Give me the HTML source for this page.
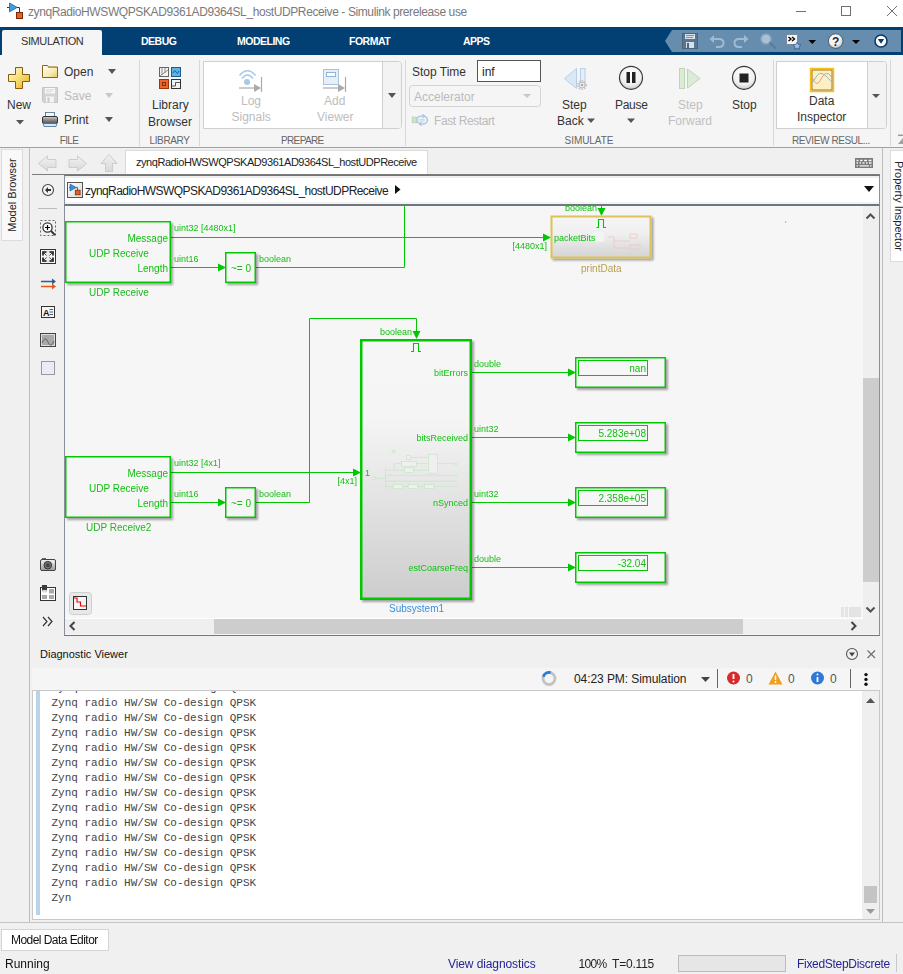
<!DOCTYPE html>
<html><head><meta charset="utf-8">
<style>
*{margin:0;padding:0;box-sizing:border-box}
html,body{width:903px;height:974px;overflow:hidden;background:#f0f0f0;font-family:"Liberation Sans",sans-serif;font-size:12px;color:#222}
.a{position:absolute}
.t{position:absolute;white-space:nowrap;line-height:1}
svg{position:absolute;overflow:visible}
</style></head><body>
<!-- TITLE BAR -->
<div class="a" style="left:0;top:0;width:903px;height:27px;background:#fff"></div>
<svg style="left:0;top:0" width="30" height="27">
  <path d="M7 7.5 H9.5 M17 7.5 H19.5 V12" stroke="#333" stroke-width="1" fill="none"/>
  <path d="M9.5 3 L17.2 7.4 L9.5 11.8 Z" fill="#3f9ee0" stroke="#1a5fa0" stroke-width="0.8"/>
  <rect x="16.5" y="12.5" width="6" height="6" fill="#e4622a" stroke="#7a2a08" stroke-width="1"/>
</svg>
<div class="t" style="left:28px;top:6px;font-size:12px;letter-spacing:-0.4px;color:#7a7a7a">zynqRadioHWSWQPSKAD9361AD9364SL_hostUDPReceive - Simulink prerelease use</div>
<svg style="left:0;top:0" width="903" height="27">
  <path d="M796 11.5 H806" stroke="#707070" stroke-width="1"/>
  <rect x="841.5" y="6.5" width="9" height="9" fill="none" stroke="#707070" stroke-width="1"/>
  <path d="M887 6 L897 16 M897 6 L887 16" stroke="#707070" stroke-width="1"/>
</svg>

<!-- TAB STRIP -->
<div class="a" style="left:0;top:27px;width:903px;height:28px;background:#023f72"></div>
<div class="a" style="left:2px;top:30px;width:100px;height:25px;background:#f5f5f5;border-radius:2px 2px 0 0"></div>
<div class="t" style="left:21px;top:36px;font-size:11px;letter-spacing:-0.4px;color:#333">SIMULATION</div>
<div class="t" style="left:141px;top:36px;font-size:10.5px;font-weight:bold;letter-spacing:-0.5px;color:#fff">DEBUG</div>
<div class="t" style="left:237px;top:36px;font-size:10.5px;font-weight:bold;letter-spacing:-0.5px;color:#fff">MODELING</div>
<div class="t" style="left:349px;top:36px;font-size:10.5px;font-weight:bold;letter-spacing:-0.5px;color:#fff">FORMAT</div>
<div class="t" style="left:463px;top:36px;font-size:10.5px;font-weight:bold;letter-spacing:-0.5px;color:#fff">APPS</div>
<svg style="left:0;top:0" width="903" height="60" id="qab">
  <path d="M665 41 L672 30 H901 V52 H672 Z" fill="#668cae"/>
  <!-- save -->
  <rect x="682.5" y="33.5" width="15" height="15" fill="#5a7590" stroke="#4d647a"/>
  <rect x="685" y="34" width="10" height="5" fill="#d8e2ec"/>
  <path d="M686 35.5 H694 M686 37.5 H693" stroke="#6a7f94" stroke-width="0.8"/>
  <rect x="686" y="42" width="8" height="6" fill="#d8e2ec"/>
  <rect x="687" y="43" width="2" height="5" fill="#4d647a"/>
  <!-- undo -->
  <path d="M711 39 H719 Q723.5 39 723.5 43 Q723.5 47 719 47 H716" fill="none" stroke="#9fbad2" stroke-width="2"/>
  <path d="M709.5 39 L714 35 V43 Z" fill="#9fbad2"/>
  <!-- redo -->
  <path d="M747 39 H739 Q734.5 39 734.5 43 Q734.5 47 739 47 H742" fill="none" stroke="#9fbad2" stroke-width="2"/>
  <path d="M748.5 39 L744 35 V43 Z" fill="#9fbad2"/>
  <!-- search -->
  <circle cx="766" cy="39" r="5" fill="#a9c0d6" stroke="#88a4bf" stroke-width="1.5"/>
  <path d="M769.5 42.5 L776 48.5" stroke="#5a7a98" stroke-width="2"/>
  <!-- shortcut -->
  <rect x="786.5" y="34.5" width="11" height="10" fill="#f4f4f4" stroke="#7a8a9a"/>
  <path d="M788.5 37 L791 39 L788.5 41 M792 37 L794.5 39 L792 41" stroke="#000" stroke-width="1.3" fill="none"/>
  <path d="M797 42 L798.2 44.5 L801 44.8 L799 46.6 L799.5 49.3 L797 48 L794.5 49.3 L795 46.6 L793 44.8 L795.8 44.5 Z" fill="#9cc4ec" stroke="#2a4a6a" stroke-width="0.6"/>
  <path d="M808.5 40 H816 L812.25 44 Z" fill="#000"/>
  <!-- help -->
  <defs><radialGradient id="hg" cx="40%" cy="35%" r="70%"><stop offset="0" stop-color="#fff"/><stop offset="0.6" stop-color="#f0f0f0"/><stop offset="1" stop-color="#b8b8b8"/></radialGradient></defs>
  <circle cx="835.7" cy="41.1" r="7.3" fill="url(#hg)" stroke="#3a4a5a" stroke-width="0.8"/>
  <text x="835.7" y="45.5" text-anchor="middle" font-family="Liberation Sans" font-weight="bold" font-size="12" fill="#1a2a40">?</text>
  <path d="M852 40 H860 L856 44 Z" fill="#000"/>
  <!-- circle down -->
  <circle cx="881" cy="41" r="6" fill="#fff" stroke="#0a3a6a" stroke-width="1.6"/>
  <path d="M877.8 39 H884.2 L881 43.8 Z" fill="#0a3a6a"/>
</svg>

<!-- RIBBON -->
<div class="a" style="left:0;top:55px;width:903px;height:92px;background:#f5f5f5"></div>
<div class="a" style="left:0;top:147px;width:903px;height:1px;background:#a0a0a0"></div>


<!-- separators -->
<div class="a" style="left:139px;top:60px;width:1px;height:86px;background:#d8d8d8"></div>
<div class="a" style="left:199px;top:60px;width:1px;height:86px;background:#d8d8d8"></div>
<div class="a" style="left:405px;top:60px;width:1px;height:86px;background:#d8d8d8"></div>
<div class="a" style="left:773px;top:60px;width:1px;height:86px;background:#d8d8d8"></div>
<div class="a" style="left:890px;top:60px;width:1px;height:86px;background:#d8d8d8"></div>
<!-- section labels -->
<div class="t" style="left:59.7px;top:136px;font-size:10px;letter-spacing:-0.6px;color:#666">FILE</div>
<div class="t" style="left:149.5px;top:136px;font-size:10px;letter-spacing:-0.37px;color:#666">LIBRARY</div>
<div class="t" style="left:281px;top:136px;font-size:10px;letter-spacing:-0.64px;color:#666">PREPARE</div>
<div class="t" style="left:564.6px;top:136px;font-size:10px;letter-spacing:-0.06px;color:#666">SIMULATE</div>
<div class="t" style="left:792px;top:136px;font-size:10px;color:#666;letter-spacing:-0.4px">REVIEW RESUL...</div>
<svg style="left:0;top:0" width="903" height="150">
  <!-- New plus -->
  <defs>
    <linearGradient id="plg" x1="0" y1="0" x2="1" y2="1"><stop offset="0" stop-color="#fffbe0"/><stop offset="0.45" stop-color="#f7e27a"/><stop offset="1" stop-color="#e2ae1c"/></linearGradient>
    <linearGradient id="flg" x1="0" y1="0" x2="1" y2="1"><stop offset="0" stop-color="#ffffff"/><stop offset="0.6" stop-color="#f8eab0"/><stop offset="1" stop-color="#e8c860"/></linearGradient>
    <linearGradient id="prg" x1="0" y1="0" x2="0" y2="1"><stop offset="0" stop-color="#d0d0d0"/><stop offset="0.5" stop-color="#8a8a8a"/><stop offset="1" stop-color="#555"/></linearGradient>
  </defs>
  <path d="M15.5 67.5 H22.5 V74.5 H29.5 V81.5 H22.5 V88.5 H15.5 V81.5 H8.5 V74.5 H15.5 Z" fill="url(#plg)" stroke="#8a5a10" stroke-width="1"/>
  <path d="M16 120 L24 120 L20 124.5 Z" fill="#555"/>
  <!-- Open folder -->
  <path d="M42.5 65.5 H47.5 L48.5 67 H57.5 V77.5 H42.5 Z" fill="url(#flg)" stroke="#8a6418" stroke-width="1"/>
  <path d="M48 67.5 H57" stroke="#c89a30" stroke-width="0.8"/>
  <path d="M108 69 L116 69 L112 74 Z" fill="#555"/>
  <!-- Save (disabled) -->
  <path d="M42.5 87.5 H57.5 V102.5 H44 L42.5 101 Z" fill="#d4d4d4" stroke="#c4c4c4"/>
  <rect x="45" y="88" width="10" height="5.5" fill="#f8f8f8"/>
  <path d="M46 89.8 H54 M46 91.8 H52" stroke="#c8c8c8" stroke-width="0.7"/>
  <rect x="46" y="96.5" width="8" height="6" fill="#f4f4f4"/>
  <rect x="47.5" y="97.5" width="2" height="5" fill="#c8c8c8"/>
  <path d="M105 93 L113 93 L109 98 Z" fill="#c8c8c8"/>
  <!-- Print -->
  <rect x="45.5" y="112.5" width="9" height="4" fill="#f4f8fc" stroke="#4a6a8a" stroke-width="0.8"/>
  <rect x="42.5" y="116.5" width="15" height="7" rx="1.5" fill="url(#prg)" stroke="#333"/>
  <path d="M43 123.5 H57 L56 126.5 H44 Z" fill="#d8e8f6" stroke="#3a6a9a" stroke-width="0.8"/>
  <path d="M105 117 L113 117 L109 122 Z" fill="#555"/>
  <!-- Library browser -->
  <rect x="159.5" y="67.5" width="9" height="9" fill="#f4f4f4" stroke="#666"/>
  <path d="M162 68 V75 M165 68 V73 M160 76 L168 70" stroke="#777" stroke-width="0.8"/>
  <rect x="171.5" y="67.5" width="9" height="9" fill="#5cb3e0" stroke="#1b5d9c"/>
  <path d="M173 73 Q174.5 69 176 72 T179 71" stroke="#1b5d9c" stroke-width="1" fill="none"/>
  <rect x="159.5" y="79.5" width="9" height="9" fill="#e8672a" stroke="#9a3510"/>
  <rect x="162.5" y="82.5" width="3" height="3" fill="none" stroke="#8a2a08"/>
  <rect x="171.5" y="79.5" width="9" height="9" fill="#eef3f8" stroke="#333"/>
  <path d="M172 86 H175.5 V82.5 H180" stroke="#555" stroke-width="1" fill="none"/>
  <!-- Prepare gallery -->
  <path d="M203.5 61.5 H398.5 Q401.5 61.5 401.5 64.5 V125.5 Q401.5 128.5 398.5 128.5 H203.5 Z" fill="#fff" stroke="#cfcfcf"/><path d="M382.5 62 H398.5 Q401 62 401 64.5 V125.5 Q401 128 398.5 128 H382.5 Z" fill="#f3f3f3"/>
  <path d="M382.5 62 V128" stroke="#cfcfcf"/>
  <path d="M388 93 L396 93 L392 98 Z" fill="#555"/>
  <!-- Log signals -->
  <path d="M239.5 75.5 Q247.5 66 255.5 75.5" stroke="#a6c8e4" stroke-width="1.5" fill="none"/>
  <path d="M242 78.5 Q247.5 71.5 253 78.5" stroke="#a6c8e4" stroke-width="1.5" fill="none"/>
  <circle cx="247" cy="82" r="3" fill="#a8c8e8"/>
  <path d="M239 88 H256" stroke="#aaa" stroke-width="1.2"/>
  <path d="M254 84 L261 88 L254 92 Z" fill="#aaa"/>
  <path d="M261.5 77 V92" stroke="#aaa" stroke-width="1.2"/>
  <!-- Add viewer -->
  <rect x="323.5" y="69.5" width="15" height="15" fill="#e6eef7" stroke="#a9c3dc"/>
  <rect x="326.5" y="72.5" width="9" height="4" fill="#fff" stroke="#8fb3d6"/>
  <path d="M323 88 H340" stroke="#aaa" stroke-width="1.2"/>
  <path d="M338 84 L345 88 L338 92 Z" fill="#aaa"/>
  <path d="M345.5 77 V92" stroke="#aaa" stroke-width="1.2"/>
  <!-- Stop time box -->
  <rect x="477.5" y="60.5" width="63" height="21" fill="#fff" stroke="#555"/>
  <!-- Accelerator dropdown -->
  <rect x="409.5" y="85.5" width="131" height="21" rx="3" fill="#f5f5f5" stroke="#d4d4d4"/>
  <path d="M523 94 L531 94 L527 98 Z" fill="#c8c8c8"/>
  <!-- Fast restart icon -->
  <rect x="412.2" y="117.1" width="5" height="5.6" fill="#cfe3c8" stroke="#b6d0ae" stroke-width="0.7"/>
  <ellipse cx="422.2" cy="120" rx="5.3" ry="4.2" fill="#e8f0f8" stroke="#a8c4de" stroke-width="1.3"/>
  <path d="M422.5 114 L424.5 116 L422.5 118 M421.5 122 L419.5 124 L421.5 126" stroke="#9ab8d4" stroke-width="1" fill="none"/>
  <path d="M419.5 119.5 H424.5 M419.5 121 H424.5" stroke="#c0d4e6" stroke-width="0.8"/>
  <!-- Step back -->
  <path d="M576.5 68.5 L564.5 78.6 L576.5 88.5 Z" fill="#d8e8f6" stroke="#b7cfe5" stroke-width="1"/>
  <rect x="580.5" y="68.5" width="4.5" height="14" fill="#e4eef8" stroke="#b7cfe5"/>
  <circle cx="582" cy="85" r="4.2" fill="none" stroke="#c4c4c4" stroke-width="1.6" stroke-dasharray="1.6,1.1"/>
  <circle cx="582" cy="85" r="3" fill="#ececec" stroke="#bdbdbd" stroke-width="1"/>
  <circle cx="582" cy="85" r="1.2" fill="#aaa"/>
  <path d="M627 118.5 L635 118.5 L631 123 Z" fill="#555"/>
  <!-- Pause -->
  <defs>
    <radialGradient id="cg" cx="50%" cy="35%" r="65%"><stop offset="0" stop-color="#ffffff"/><stop offset="0.7" stop-color="#f0f0f0"/><stop offset="1" stop-color="#c8c8c8"/></radialGradient>
    <linearGradient id="pg" x1="0" y1="0" x2="0" y2="1"><stop offset="0" stop-color="#fff"/><stop offset="1" stop-color="#d8d8d8"/></linearGradient>
  </defs>
  <circle cx="631" cy="77.8" r="11.5" fill="url(#cg)" stroke="#3a3a3a" stroke-width="1.2"/>
  <rect x="626.5" y="72" width="3.5" height="11" fill="#222"/>
  <rect x="632" y="72" width="3.5" height="11" fill="#222"/>
  <!-- Step forward -->
  <rect x="679.5" y="68.5" width="5" height="20" fill="#dcebd8" stroke="#bcd6b6"/>
  <path d="M687.5 69 L700 78.5 L687.5 88 Z" fill="#dcebd8" stroke="#bcd6b6" stroke-width="1"/>
  <!-- Stop -->
  <circle cx="744" cy="77.8" r="11.5" fill="url(#cg)" stroke="#3a3a3a" stroke-width="1.2"/>
  <rect x="739.5" y="73.5" width="9" height="9" fill="#222"/>
  <!-- Data inspector box -->
  <path d="M776.5 61.5 H883.5 Q886.5 61.5 886.5 64.5 V125.5 Q886.5 128.5 883.5 128.5 H776.5 Z" fill="#fff" stroke="#cfcfcf"/>
  <path d="M867.5 62 H883.5 Q886 62 886 64.5 V125.5 Q886 128 883.5 128 H867.5 Z" fill="#f3f3f3" stroke="none"/><path d="M867.5 62 V128" stroke="#cfcfcf"/>
  <path d="M872 94 L880 94 L876 98 Z" fill="#555"/>
  <rect x="810.5" y="68.5" width="23" height="23" fill="#fdf1c4" stroke="#f2c218" stroke-width="1.5"/>
  <rect x="812" y="70" width="20" height="20" fill="none" stroke="#a8731c" stroke-width="1"/>
  <path d="M812 77 C814 82 816 84 818 83 C821 81 823 73 826.7 73.4 C829.5 73.6 831 76 832 78.6" stroke="#e09a88" stroke-width="1" fill="none"/>
  <path d="M812 83 C815 80 817 73.4 820.8 73.4 C824 73.4 828 78 832 82.2" stroke="#8cb4c8" stroke-width="1" fill="none"/>
  <!-- little fragment right -->
  <path d="M898 135.3 H903" stroke="#999" stroke-width="1.5"/><path d="M898 144 L903 138 V144 Z" fill="#a0a0a0"/>
</svg>
<div class="t" style="left:7px;top:99px;color:#333">New</div>
<div class="t" style="left:64px;top:66px;color:#333">Open</div>
<div class="t" style="left:64px;top:90px;color:#bbb">Save</div>
<div class="t" style="left:64px;top:114px;color:#333">Print</div>
<div class="t" style="left:152px;top:99px;color:#333">Library</div>
<div class="t" style="left:148px;top:115.5px;color:#333">Browser</div>
<div class="t" style="left:241px;top:95px;color:#bdbdbd">Log</div>
<div class="t" style="left:231.5px;top:111px;color:#bdbdbd">Signals</div>
<div class="t" style="left:324px;top:95px;color:#bdbdbd">Add</div>
<div class="t" style="left:317px;top:111px;color:#bdbdbd">Viewer</div>
<div class="t" style="left:412px;top:66px;color:#333">Stop Time</div>
<div class="t" style="left:482px;top:66px;color:#222">inf</div>
<div class="t" style="left:414px;top:91px;color:#bbb">Accelerator</div>
<div class="t" style="left:434px;top:115px;color:#bbb;letter-spacing:-0.4px">Fast Restart</div>
<div class="t" style="left:562px;top:99px;color:#333">Step</div>
<div class="t" style="left:557px;top:115px;color:#333">Back</div>
<svg style="left:0;top:0" width="903" height="150"><path d="M587 118.5 L595 118.5 L591 123 Z" fill="#555"/></svg>
<div class="t" style="left:615px;top:99px;color:#333;letter-spacing:-0.3px">Pause</div>
<div class="t" style="left:678px;top:99px;color:#c0c0c0">Step</div>
<div class="t" style="left:668px;top:115px;color:#c0c0c0">Forward</div>
<div class="t" style="left:732px;top:99px;color:#333">Stop</div>
<div class="t" style="left:809px;top:95px;color:#333">Data</div>
<div class="t" style="left:797px;top:111px;color:#333">Inspector</div>


<!-- LEFT MODEL BROWSER TAB -->
<div class="a" style="left:1px;top:149px;width:22px;height:92px;background:#f9f9f9;border:1px solid #dcdcdc"></div>
<div class="t" style="left:12px;top:195px;font-size:11px;color:#222;transform:translate(-50%,-50%) rotate(-90deg);transform-origin:center">Model Browser</div>
<div class="a" style="left:29px;top:148px;width:1px;height:775px;background:#bdbdbd"></div>
<!-- RIGHT PROPERTY INSPECTOR -->
<div class="a" style="left:882px;top:148px;width:1px;height:775px;background:#bdbdbd"></div>
<div class="a" style="left:890px;top:150px;width:16px;height:112px;background:#fff;border:1px solid #dcdcdc"></div>
<div class="t" style="left:898px;top:206px;font-size:11px;color:#222;transform:translate(-50%,-50%) rotate(90deg);transform-origin:center">Property Inspector</div>

<!-- EDITOR TOOLBAR ROW -->
<div class="a" style="left:30px;top:148px;width:850px;height:27px;background:#f0f0f0"></div>
<svg style="left:0;top:0" width="903" height="210">
  <defs><linearGradient id="nag" x1="0" y1="0" x2="0" y2="1"><stop offset="0" stop-color="#f2f2f2"/><stop offset="1" stop-color="#d8d8d8"/></linearGradient></defs>
  <path d="M38.5 163.5 L47.5 156 V159.5 H56 V167.5 H47.5 V171 Z" fill="url(#nag)" stroke="#cccccc"/>
  <path d="M86.5 163.5 L77.5 156 V159.5 H69 V167.5 H77.5 V171 Z" fill="url(#nag)" stroke="#cccccc"/>
  <path d="M109 154.5 L117 163.5 H112.5 V171.5 H105.5 V163.5 H101 Z" fill="url(#nag)" stroke="#cccccc"/>
  <!-- keyboard -->
  <rect x="855" y="158" width="18" height="10" fill="#7a7a7a"/>
  <path d="M856.5 160.5 H858.5 M860 160.5 H862.5 M864 160.5 H867 M868.5 160.5 H871.5 M856.5 163 H858 M859.5 163 H861 M862.5 163 H864.5 M866 163 H867.5 M869 163 H871.5 M856.5 165.8 H858 M859.5 165.8 H869 M870 165.8 H871.5" stroke="#f4f4f4" stroke-width="1.3"/>
</svg>
<div class="a" style="left:125px;top:150px;width:303px;height:25px;background:#fff;border:1px solid #dadada;border-bottom:none"></div>
<div class="t" style="left:136px;top:157px;font-size:11px;letter-spacing:-0.45px;color:#222">zynqRadioHWSWQPSKAD9361AD9364SL_hostUDPReceive</div>
<div class="a" style="left:32px;top:174px;width:848px;height:1px;background:#7c7c7c"></div>

<!-- LEFT PALETTE -->
<div class="a" style="left:30px;top:175px;width:34px;height:462px;background:#f0f0f0"></div>
<svg style="left:0;top:0" width="70" height="640">
  <circle cx="48" cy="190" r="5.5" fill="#f4f4f4" stroke="#444" stroke-width="1.1"/>
  <path d="M45 190 L48 187 V189 H51 V191 H48 V193 Z" fill="#333"/>
  <path d="M38 208.5 H57" stroke="#bbb"/>
  <rect x="40.5" y="220.5" width="15" height="15" fill="none" stroke="#666" stroke-dasharray="2,2"/>
  <circle cx="47.5" cy="227.5" r="4.6" fill="#fff" stroke="#333" stroke-width="1.3"/>
  <path d="M45 227.5 H50 M47.5 225 V230" stroke="#000" stroke-width="1.2"/>
  <path d="M51 231 L55 235" stroke="#333" stroke-width="1.8"/>
  <defs><linearGradient id="fig" x1="0" y1="0" x2="1" y2="0"><stop offset="0" stop-color="#fff"/><stop offset="0.5" stop-color="#e6e6e6"/><stop offset="1" stop-color="#fff"/></linearGradient></defs>
  <rect x="40.5" y="249.5" width="15" height="14" fill="url(#fig)" stroke="#333"/>
  <path d="M43 255.5 V252 H46.5 M53 255.5 V252 H49.5 M43 257.5 V261 H46.5 M53 257.5 V261 H49.5" stroke="#111" stroke-width="1.6" fill="none"/>
  <path d="M43.5 252.5 L46.5 255.5 M52.5 252.5 L49.5 255.5 M43.5 260.5 L46.5 257.5 M52.5 260.5 L49.5 257.5" stroke="#333" stroke-width="0.9"/>
  <path d="M41 281.5 H53" stroke="#2f5f8f" stroke-width="1.5"/><path d="M52 278.5 L56 281.5 L52 284.5 Z" fill="#2f5f8f"/>
  <path d="M41 286.5 H53" stroke="#e05a20" stroke-width="1.5"/><path d="M52 283.5 L56 286.5 L52 289.5 Z" fill="#e05a20"/>
  <rect x="41.5" y="306.5" width="13" height="11" fill="#f6f6f6" stroke="#333"/>
  <text x="43" y="315.5" font-size="9" font-weight="bold" font-family="Liberation Sans" fill="#111">A</text>
  <path d="M49.5 309.5 H53 M49.5 312 H53 M49.5 314.5 H53" stroke="#333" stroke-width="0.8"/>
  <rect x="40.5" y="333.5" width="15" height="13" fill="#ddd" stroke="#444"/>
  <rect x="42" y="335" width="12" height="10" fill="#a8a8a8"/>
  <path d="M42 343 Q45 335 48 342 T54 341" stroke="#666" fill="none"/>
  <rect x="41.5" y="361.5" width="13" height="13" fill="#e8ecf8" stroke="#9a9a9a"/>
  <!-- camera -->
  <defs><linearGradient id="cmg" x1="0" y1="0" x2="0" y2="1"><stop offset="0" stop-color="#f4f4f4"/><stop offset="1" stop-color="#9a9a9a"/></linearGradient></defs>
  <rect x="42" y="558" width="4" height="2" fill="#666"/>
  <rect x="40.5" y="559.5" width="15" height="11" rx="1.5" fill="url(#cmg)" stroke="#444"/>
  <circle cx="47.8" cy="565.2" r="3.8" fill="#777" stroke="#333" stroke-width="1"/>
  <circle cx="47.8" cy="565.2" r="2" fill="#444"/>
  <rect x="53" y="561.5" width="1.2" height="1.2" fill="#fff"/>
  <!-- grid icon -->
  <rect x="40.5" y="587.5" width="15" height="13" fill="#fff" stroke="#333"/>
  <rect x="42" y="585" width="5" height="7" fill="#3a3a3a"/>
  <rect x="42" y="590" width="5" height="2.5" rx="1.2" fill="#ddd"/>
  <rect x="49" y="589" width="5" height="4.5" fill="#a8a8a8"/>
  <rect x="42" y="595" width="5" height="4" fill="#a8a8a8"/>
  <rect x="49" y="595" width="5" height="4" fill="#a8a8a8"/>
  <path d="M43 617 L47 621.5 L43 626 M48 617 L52 621.5 L48 626" stroke="#333" stroke-width="1.2" fill="none"/>
</svg>

<!-- ADDRESS BAR -->
<div class="a" style="left:64px;top:175px;width:816px;height:31px;background:#fff;border-top:1px solid #6e7680;border-left:1px solid #8a9099;border-right:1px solid #8a9099;border-bottom:2px solid #6e7680"></div><div class="a" style="left:65px;top:176px;width:814px;height:2px;background:#efefef"></div><div class="a" style="left:65px;top:202px;width:814px;height:2px;background:#f2f2f2"></div>
<svg style="left:0;top:0" width="903" height="210">
  <defs><linearGradient id="mig" x1="0" y1="0" x2="1" y2="1"><stop offset="0" stop-color="#ffffff"/><stop offset="1" stop-color="#d8d8d8"/></linearGradient></defs>
  <rect x="67.5" y="182.5" width="15" height="15" fill="url(#mig)" stroke="#555"/>
  <path d="M69 187.5 H70 M76 187.5 H77.5 V190" stroke="#444" stroke-width="0.8" fill="none"/>
  <path d="M70 184 V191 L76.3 187.5 Z" fill="#3a90d8" stroke="#1a5a9a" stroke-width="0.6"/>
  <rect x="75.3" y="190.2" width="4.8" height="4.6" fill="#e4622a" stroke="#7a2a08" stroke-width="0.8"/>
  <path d="M395 185 L400.5 189.5 L395 194 Z" fill="#111"/>
  <path d="M864 186 L874 186 L869 192 Z" fill="#111"/>
</svg>
<div class="t" style="left:85px;top:185px;font-size:12px;letter-spacing:-0.56px;color:#222">zynqRadioHWSWQPSKAD9361AD9364SL_hostUDPReceive</div>

<!-- CANVAS -->
<div class="a" style="left:64px;top:206px;width:816px;height:430px;background:#f6f6f6;border-left:1px solid #8a9099;border-right:1px solid #8a9099;border-bottom:1px solid #6e7680"></div>
<!-- scrollbars -->
<div class="a" style="left:863px;top:206px;width:16px;height:413px;background:#efefef"></div>
<div class="a" style="left:863px;top:378px;width:16px;height:204px;background:#cdcdcd"></div>
<div class="a" style="left:65px;top:618px;width:798px;height:1px;background:#fff"></div>
<div class="a" style="left:65px;top:619px;width:814px;height:15px;background:#efefef"></div>
<div class="a" style="left:214px;top:619px;width:529px;height:15px;background:#cdcdcd"></div>
<svg style="left:0;top:0" width="903" height="640">
  <path d="M866.5 218.5 L870.5 214.5 L874.5 218.5" stroke="#505050" stroke-width="2" fill="none"/>
  <path d="M866.5 607.5 L870.5 611.5 L874.5 607.5" stroke="#505050" stroke-width="2" fill="none"/>
  <path d="M74.5 622 L70.5 626 L74.5 630" stroke="#444" stroke-width="2" fill="none"/>
  <path d="M851.5 622 L855.5 626 L851.5 630" stroke="#444" stroke-width="2" fill="none"/>
  <rect x="841" y="607" width="3" height="10" fill="#e4e4e4"/><rect x="845" y="607" width="3" height="10" fill="#e4e4e4"/><rect x="849" y="607" width="12" height="10" fill="#e4e4e4"/>
  <!-- sim data icon button -->
  <rect x="69.5" y="592.5" width="22" height="22" rx="3" fill="#e8e8e8" stroke="#cfcfcf"/>
  <rect x="73.5" y="596.5" width="13" height="13" fill="#f6f6f6" stroke="#333"/>
  <path d="M74 598 H77 V602 H80.5 V606 H86" stroke="#e00" stroke-width="1.1" fill="none"/>
</svg>


<!-- DIAGRAM -->
<svg style="left:65px;top:206px" width="798" height="412" viewBox="65 206 798 412">
  <defs>
    <filter id="sh" x="-10%" y="-10%" width="130%" height="130%"><feGaussianBlur in="SourceAlpha" stdDeviation="1.2"/><feOffset dx="2" dy="2"/><feComponentTransfer><feFuncA type="linear" slope="0.35"/></feComponentTransfer><feMerge><feMergeNode/><feMergeNode in="SourceGraphic"/></feMerge></filter>
    <linearGradient id="sg" x1="0" y1="0" x2="0" y2="1"><stop offset="0" stop-color="#f6f6f6"/><stop offset="0.3" stop-color="#f5f5f5"/><stop offset="1" stop-color="#cdcdcd"/></linearGradient>
    <linearGradient id="pg2" x1="0" y1="0" x2="0" y2="1"><stop offset="0" stop-color="#f5f5f5"/><stop offset="0.4" stop-color="#f0f0f0"/><stop offset="1" stop-color="#d4d4d4"/></linearGradient>
  </defs>
  <g fill="none" stroke="#00c800" stroke-width="1">
    <!-- top group lines -->
    <path d="M171 237.5 H544"/>
    <path d="M171 267.5 H219"/>
    <path d="M256 267.5 H404.5 V206"/>
    <path d="M601.5 206 V209"/>
    <!-- bottom group lines -->
    <path d="M171 472.5 H354"/>
    <path d="M171 502.5 H219"/>
    <path d="M256 502.5 H309.5 V318.5 H416.5 V332"/>
    <!-- outputs -->
    <path d="M472 372.5 H569"/>
    <path d="M472 437.5 H569"/>
    <path d="M472 502.5 H569"/>
    <path d="M472 567.5 H569"/>
  </g>
  <g fill="#00c800">
    <path d="M543 233.5 L551 237.5 L543 241.5 Z"/>
    <path d="M218 263.5 L226 267.5 L218 271.5 Z"/>
    <path d="M218 498.5 L226 502.5 L218 506.5 Z"/>
    <path d="M353 468.5 L361 472.5 L353 476.5 Z"/>
    <path d="M597.5 208 L601.5 216 L605.5 208 Z"/>
    <path d="M412.5 331 L416.5 339 L420.5 331 Z"/>
    <path d="M568 368.5 L576 372.5 L568 376.5 Z"/>
    <path d="M568 433.5 L576 437.5 L568 441.5 Z"/>
    <path d="M568 498.5 L576 502.5 L568 506.5 Z"/>
    <path d="M568 563.5 L576 567.5 L568 571.5 Z"/>
  </g>
  <!-- blocks -->
  <g filter="url(#sh)">
    <rect x="65.75" y="221.75" width="104.5" height="60.5" fill="#f6f6f6" stroke="#00c800" stroke-width="1.5"/>
    <rect x="225.75" y="252.75" width="29.5" height="29.5" fill="#f6f6f6" stroke="#00c800" stroke-width="1.5"/>
    <rect x="551.5" y="216.5" width="99" height="41" fill="url(#pg2)" stroke="#dcc258" stroke-width="2"/>
    <rect x="65.75" y="456.75" width="104.5" height="60.5" fill="#f6f6f6" stroke="#00c800" stroke-width="1.5"/>
    <rect x="225.75" y="487.75" width="29.5" height="29.5" fill="#f6f6f6" stroke="#00c800" stroke-width="1.5"/>
    <rect x="361.25" y="340.25" width="109.5" height="258.5" fill="url(#sg)" stroke="#00c800" stroke-width="2.5"/>
    <rect x="575.75" y="357.75" width="89.5" height="29.5" fill="#f6f6f6" stroke="#00c800" stroke-width="1.5"/>
    <rect x="575.75" y="422.75" width="89.5" height="29.5" fill="#f6f6f6" stroke="#00c800" stroke-width="1.5"/>
    <rect x="575.75" y="487.75" width="89.5" height="29.5" fill="#f6f6f6" stroke="#00c800" stroke-width="1.5"/>
    <rect x="575.75" y="552.75" width="89.5" height="29.5" fill="#f6f6f6" stroke="#00c800" stroke-width="1.5"/>
  </g>
  <g fill="none" stroke="#00c800" stroke-width="1">
    <rect x="578.5" y="360.5" width="69" height="15"/>
    <rect x="578.5" y="425.5" width="69" height="15"/>
    <rect x="578.5" y="490.5" width="69" height="15"/>
    <rect x="578.5" y="555.5" width="69" height="15"/>
  </g>
  <g fill="none" stroke="#00c800" stroke-width="1.1">
    <path d="M596.5 227.5 H598.5 V219.5 H603.5 V227.5 H606"/>
    <path d="M411 351.5 H413.5 V343.5 H418.5 V351.5 H421"/>
  </g>
  <rect x="785" y="221.5" width="1.2" height="1" fill="#888"/>
  <!-- faint printData internals -->
  <g fill="none" stroke="#efc8c0" stroke-width="0.8">
    <rect x="592" y="231" width="12.5" height="11" fill="#f4f4f4" stroke="#ececec"/>
    <path d="M608 237 H614 V248 H630 M614 241 H630"/>
    <rect x="630" y="234" width="7" height="4"/>
    <rect x="630" y="245" width="10" height="4"/>
  </g>
  <!-- faint subsystem internals -->
  <g fill="#efefef" stroke="#bfe6bf" stroke-width="0.6">
    <path d="M385.5 467.7 V489.3 M373 478.4 H385.5 M385.5 475.4 H457 M385.5 481.2 H457 M385.5 486.5 H457 M385.5 470.2 H428.3 M394.3 463.6 V470.2 M394.3 463.6 H428.3 M410.4 457.4 H428.3 M437.5 463.6 H457" fill="none"/>
    <rect x="392.1" y="450.2" width="2.8" height="2.5"/>
    <rect x="406.5" y="455.7" width="3.9" height="3.7"/>
    <rect x="401.5" y="461.6" width="15" height="4.8"/>
    <rect x="404.3" y="467.9" width="9.2" height="4.5"/>
    <rect x="428.3" y="454.2" width="9.2" height="19"/>
    <rect x="393.2" y="484.5" width="9.2" height="4"/>
    <rect x="408.2" y="484.5" width="9.4" height="4"/>
    <rect x="424.5" y="484.5" width="9.2" height="4"/>
    <rect x="372.2" y="477.7" width="3.3" height="1.6"/>
    <ellipse cx="456" cy="475.4" rx="1.7" ry="1"/>
    <ellipse cx="456" cy="486.5" rx="1.7" ry="1"/>
    <ellipse cx="456" cy="463.6" rx="1.7" ry="1"/>
  </g>
</svg>
<style>
.g9{position:absolute;white-space:nowrap;line-height:1;font-size:9px;color:#10c010;will-change:transform}
.g10{position:absolute;white-space:nowrap;line-height:1;font-size:10px;color:#10c010;will-change:transform}
</style>
<style>.r{transform:translateX(-100%)}</style>
<div class="g10 r" style="left:167.5px;top:234px;">Message</div>
<div class="g10" style="left:88.5px;top:249px;">UDP Receive</div>
<div class="g10 r" style="left:167.5px;top:264px;">Length</div>
<div class="g9" style="left:173.5px;top:224px;">uint32 [4480x1]</div>
<div class="g9" style="left:173.5px;top:255px;">uint16</div>
<div class="g10" style="left:230.5px;top:264px;">~= 0</div>
<div class="g9" style="left:259px;top:255px;">boolean</div>
<div class="g10 r" style="left:167.5px;top:469px;">Message</div>
<div class="g10" style="left:88.5px;top:484px;">UDP Receive</div>
<div class="g10 r" style="left:167.5px;top:499px;">Length</div>
<div class="g9" style="left:173.5px;top:459px;">uint32 [4x1]</div>
<div class="g9" style="left:173.5px;top:490px;">uint16</div>
<div class="g10" style="left:230.5px;top:499px;">~= 0</div>
<div class="g9" style="left:259px;top:490px;">boolean</div>
<div class="g10" style="left:88.5px;top:288px;color:#20b820">UDP Receive</div>
<div class="g10" style="left:86px;top:523px;color:#20b820">UDP Receive2</div>
<div class="g9 r" style="left:597px;top:204px;">boolean</div>
<div class="g9" style="left:554px;top:234px;">packetBits</div>
<div class="g9 r" style="left:547px;top:242px;">[4480x1]</div>
<div class="g10" style="left:580.5px;top:264px;color:#b8a050">printData</div>
<div class="g9 r" style="left:411.8px;top:328px;">boolean</div>
<div class="g9 r" style="left:356.8px;top:477px;">[4x1]</div>
<div class="g9" style="left:365px;top:469px;">1</div>
<div class="g9 r" style="left:467.7px;top:369px;">bitErrors</div>
<div class="g9" style="left:474px;top:360px;">double</div>
<div class="g10 r" style="left:645.6px;top:364px;">nan</div>
<div class="g9 r" style="left:467.7px;top:434px;">bitsReceived</div>
<div class="g9" style="left:474px;top:425px;">uint32</div>
<div class="g10 r" style="left:645.6px;top:429px;">5.283e+08</div>
<div class="g9 r" style="left:467.7px;top:499px;">nSynced</div>
<div class="g9" style="left:474px;top:490px;">uint32</div>
<div class="g10 r" style="left:645.6px;top:494px;">2.358e+05</div>
<div class="g9 r" style="left:467.7px;top:564px;">estCoarseFreq</div>
<div class="g9" style="left:474px;top:555px;">double</div>
<div class="g10 r" style="left:645.6px;top:559px;">-32.04</div>
<div class="g10" style="left:389px;top:604px;color:#3a90e0">Subsystem1</div>
<!-- DIAGNOSTIC VIEWER -->
<div class="t" style="left:40px;top:649px;font-size:11px;color:#111">Diagnostic Viewer</div>
<svg style="left:0;top:0" width="903" height="974">
  <circle cx="852" cy="654" r="5.5" fill="none" stroke="#555" stroke-width="1.1"/>
  <path d="M849 652.5 L855 652.5 L852 656.5 Z" fill="#444"/>
  <path d="M867.5 650.5 L875 658 M875 650.5 L867.5 658" stroke="#707070" stroke-width="1.2"/>
</svg>
<div class="a" style="left:32px;top:668px;width:848px;height:22px;background:#f5f5f5"></div>
<svg style="left:0;top:0" width="903" height="974">
  <circle cx="549" cy="678.5" r="6" fill="none" stroke="#c2c2c2" stroke-width="2.8"/>
  <path d="M543.3 676.6 A6 6 0 0 1 550.6 672.7" fill="none" stroke="#1f7fe0" stroke-width="2.8"/>
  <path d="M701 677 L710 677 L705.5 682 Z" fill="#444"/>
  <path d="M717.5 669 V688" stroke="#666"/>
  <circle cx="733.5" cy="678" r="6.5" fill="#d62b2b"/>
  <path d="M733.5 674 V679" stroke="#fff" stroke-width="1.8"/><circle cx="733.5" cy="681.5" r="1" fill="#fff"/>
  <path d="M775.5 671.5 L782.5 684.5 H768.5 Z" fill="#f0a020"/>
  <path d="M775.5 675.5 V680" stroke="#fff" stroke-width="1.5"/><circle cx="775.5" cy="682" r="0.9" fill="#fff"/>
  <circle cx="817.5" cy="678" r="6.5" fill="#2e78d8"/>
  <path d="M817.5 677 V682" stroke="#fff" stroke-width="1.8"/><circle cx="817.5" cy="674.5" r="1" fill="#fff"/>
  <path d="M850.5 669 V688" stroke="#666"/>
  <circle cx="866" cy="674.6" r="1.7" fill="#111"/><circle cx="866" cy="679.4" r="1.7" fill="#111"/><circle cx="866" cy="684.2" r="1.7" fill="#111"/>
</svg>
<div class="t" style="left:574px;top:673px;font-size:12px;letter-spacing:-0.08px;color:#222">04:23 PM: Simulation</div>
<div class="t" style="left:746px;top:673px;font-size:12px;color:#555">0</div>
<div class="t" style="left:788px;top:673px;font-size:12px;color:#555">0</div>
<div class="t" style="left:830px;top:673px;font-size:12px;color:#555">0</div>
<div class="a" style="left:32px;top:690px;width:848px;height:230px;background:#fff;border:1px solid #c8c8c8"></div>
<div class="a" style="left:36px;top:691px;width:4px;height:224px;background:#b8d4ea"></div>
<div class="a" style="left:862px;top:691px;width:17px;height:228px;background:#efefef"></div>
<div class="a" style="left:864px;top:886px;width:13px;height:17px;background:#c4c4c4"></div>
<svg style="left:0;top:0" width="903" height="974">
  <path d="M866 703 L870.5 698 L875 703 Z" fill="#555"/>
  <path d="M866 909 L870.5 914 L875 909 Z" fill="#999"/>
</svg>
<div class="a" style="left:41px;top:691px;width:820px;height:227px;overflow:hidden">
<div class="t" style="left:10.5px;top:-8.5px;font-family:'Liberation Mono',monospace;font-size:11px;color:#383838">Zynq radio HW/SW Co-design QPSK</div>
</div>
<div class="t" style="left:51.5px;top:697.5px;font-family:'Liberation Mono',monospace;font-size:11px;color:#444">Zynq radio HW/SW Co-design QPSK</div>
<div class="t" style="left:51.5px;top:712.5px;font-family:'Liberation Mono',monospace;font-size:11px;color:#444">Zynq radio HW/SW Co-design QPSK</div>
<div class="t" style="left:51.5px;top:727.5px;font-family:'Liberation Mono',monospace;font-size:11px;color:#444">Zynq radio HW/SW Co-design QPSK</div>
<div class="t" style="left:51.5px;top:742.5px;font-family:'Liberation Mono',monospace;font-size:11px;color:#444">Zynq radio HW/SW Co-design QPSK</div>
<div class="t" style="left:51.5px;top:757.5px;font-family:'Liberation Mono',monospace;font-size:11px;color:#444">Zynq radio HW/SW Co-design QPSK</div>
<div class="t" style="left:51.5px;top:772.5px;font-family:'Liberation Mono',monospace;font-size:11px;color:#444">Zynq radio HW/SW Co-design QPSK</div>
<div class="t" style="left:51.5px;top:787.5px;font-family:'Liberation Mono',monospace;font-size:11px;color:#444">Zynq radio HW/SW Co-design QPSK</div>
<div class="t" style="left:51.5px;top:802.5px;font-family:'Liberation Mono',monospace;font-size:11px;color:#444">Zynq radio HW/SW Co-design QPSK</div>
<div class="t" style="left:51.5px;top:817.5px;font-family:'Liberation Mono',monospace;font-size:11px;color:#444">Zynq radio HW/SW Co-design QPSK</div>
<div class="t" style="left:51.5px;top:832.5px;font-family:'Liberation Mono',monospace;font-size:11px;color:#444">Zynq radio HW/SW Co-design QPSK</div>
<div class="t" style="left:51.5px;top:847.5px;font-family:'Liberation Mono',monospace;font-size:11px;color:#444">Zynq radio HW/SW Co-design QPSK</div>
<div class="t" style="left:51.5px;top:862.5px;font-family:'Liberation Mono',monospace;font-size:11px;color:#444">Zynq radio HW/SW Co-design QPSK</div>
<div class="t" style="left:51.5px;top:877.5px;font-family:'Liberation Mono',monospace;font-size:11px;color:#444">Zynq radio HW/SW Co-design QPSK</div>

<div class="t" style="left:51.5px;top:892.5px;font-family:'Liberation Mono',monospace;font-size:11px;color:#444">Zyn</div>
<div class="a" style="left:0;top:922px;width:903px;height:1px;background:#c4c4c4"></div>

<!-- MODEL DATA EDITOR TAB -->
<div class="a" style="left:1px;top:929px;width:108px;height:22px;background:#fff;border:1px solid #d4d4d4"></div>
<div class="t" style="left:11px;top:934px;font-size:12px;letter-spacing:-0.55px;color:#111">Model Data Editor</div>
<!-- STATUS BAR -->
<div class="t" style="left:5px;top:958px;font-size:12px;color:#111">Running</div>
<div class="t" style="left:448px;top:958px;font-size:12px;letter-spacing:-0.1px;color:#242496">View diagnostics</div>
<div class="t" style="left:578.5px;top:958px;font-size:12px;letter-spacing:-0.7px;color:#222">100%</div>
<div class="t" style="left:612px;top:958px;font-size:12px;letter-spacing:-0.2px;color:#222">T=0.115</div>
<div class="a" style="left:678px;top:955px;width:108px;height:17px;background:#e6e6e6;border:1px solid #bcbcbc"></div>
<div class="t" style="left:797px;top:958px;font-size:12px;letter-spacing:-0.3px;color:#242496">FixedStepDiscrete</div>
<div class="a" style="left:896px;top:954px;width:1px;height:18px;background:#c8c8c8"></div>

</body></html>
